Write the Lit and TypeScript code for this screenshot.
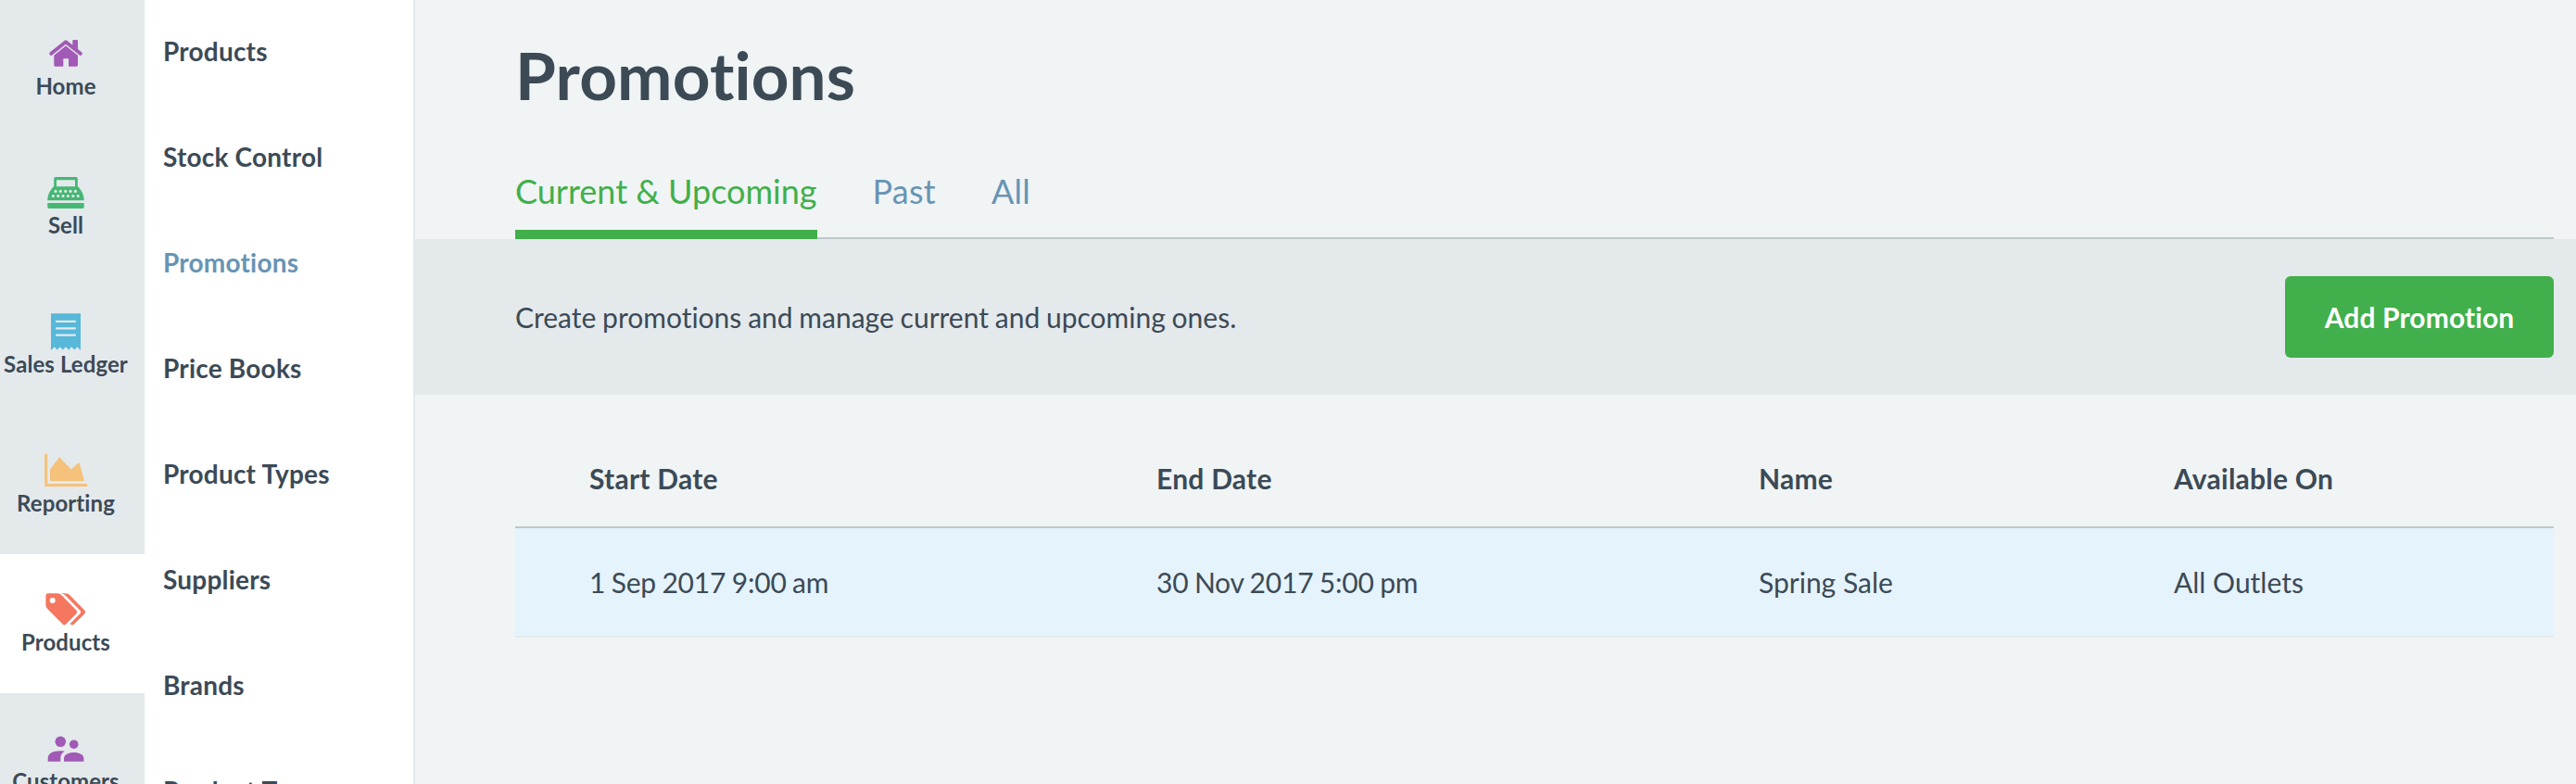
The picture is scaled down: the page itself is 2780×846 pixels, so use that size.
import { LitElement, html, css, svg } from "lit";
import { customElement } from "lit/decorators.js";
import { classMap } from "lit/directives/class-map.js";

const icons = {
  home: svg`
    <path d="M55.3 59.800 71 47.200 86.800 59.800" fill="none" stroke="currentColor" stroke-width="4" stroke-linecap="round" stroke-linejoin="round"/>
    <path d="M78.300 46q0-1 1-1h3.700q1 0 1 1v11.500l-5.700-4.600z"/>
    <path d="M71 51.400 84 61.800v10.400q0 1.600-1.600 1.600H74v-8.600h-5.700v8.600h-8.400q-1.600 0-1.600-1.600V61.800z"/>`,
  sell: svg`
    <path fill-rule="evenodd" d="M60 43h22q1.800 0 1.800 1.800v8.200c4 4 6.900 9.200 6.900 15.200H51.300c0-6 2.900-11.200 6.900-15.200v-8.200Q58.200 43 60 43zM61 46.300v6.900h20v-6.900z"/>
    <path d="M51.300 71h39.400v4.300q0 1.700-1.700 1.700H53q-1.700 0-1.700-1.700z"/>
    <g class="cut">
      ${[60, 65.3, 70.7, 76, 81.4].map((x) => svg`<circle cx=${x} cy="58.400" r="1.550"/>`)}
      ${[57.4, 62.7, 68, 73.4, 78.8, 84.2].map((x) => svg`<circle cx=${x} cy="63.500" r="1.550"/>`)}
    </g>`,
  ledger: svg`
    <path d="M55 40.200h32v39.200l-.6.100-3-3.300-3 3.300-3.200-3.300-3.100 3.300-3.100-3.300-3.100 3.300-3.200-3.300-3 3.300-3-3.300-3 3.300-.7-.1z"/>
    <path class="rule" d="M61 48.800h20M61 56.300h20M61 63.600h20"/>`,
  reporting: svg`
    <path d="M48.200 42h3v32H94v3H48.200z"/>
    <path d="M54 58.400 64.200 45.300 76.700 58.400 85.500 51 91 71H54z"/>`,
  products: svg`
    <path fill-rule="evenodd" d="M52 42.300h9.500c2 0 3.700.8 5.200 2.200L82.400 60.400q1.700 1.900 0 3.800L71.200 75.600q-1.800 1.800-3.600 0L51.400 59.300c-1.400-1.500-2-3-2-5V45q0-2.700 2.600-2.700zM56.700 46.900a3 3 0 1 0 0 6 3 3 0 0 0 0-6z"/>
    <path d="M65.600 42.300h4.700c2.200 0 3.800.8 5.300 2.200L91.300 60.400q1.700 1.900 0 3.800L80 75.600q-1.900 1.800-4 0L75.700 75 86.500 64q1.400-1.600 0-3.200L71.200 45.300c-1.700-1.700-3.200-2.600-5.600-3z"/>`,
  customers: svg`
    <circle cx="65.300" cy="52.300" r="5.800"/>
    <circle cx="79.700" cy="55.200" r="4.800"/>
    <path d="M51.700 73.800V70c0-5 5.600-7.700 13.400-7.700 1.700 0 3.200.1 4.600.4-3.200 2-4.400 4.300-4.400 7.200v3.900z"/>
    <path d="M69 73.800V70.600c0-4.300 4.600-6.500 10.700-6.500s10.700 2.200 10.700 6.500v3.200z"/>`,
};

type IconName = keyof typeof icons;

const sections: { label: string; icon: IconName; active?: boolean }[] = [
  { label: "Home", icon: "home" },
  { label: "Sell", icon: "sell" },
  { label: "Sales Ledger", icon: "ledger" },
  { label: "Reporting", icon: "reporting" },
  { label: "Products", icon: "products", active: true },
  { label: "Customers", icon: "customers" },
];

const pages = [
  "Products",
  "Stock Control",
  "Promotions",
  "Price Books",
  "Product Types",
  "Suppliers",
  "Brands",
  "Product Tags",
];

const tabs = ["Current & Upcoming", "Past", "All"];

const promotions = [
  {
    start: "1 Sep 2017 9:00 am",
    end: "30 Nov 2017 5:00 pm",
    name: "Spring Sale",
    outlets: "All Outlets",
  },
];

@customElement("app-sidebar")
class AppSidebar extends LitElement {
  static styles = css`
    :host {
      display: block;
      flex: none;
      width: 156px;
      overflow: hidden;
      background: #e4e9ec;
    }
    .list {
      display: flex;
      flex-direction: column;
      margin-top: -2px;
    }
    .item {
      box-sizing: border-box;
      flex: none;
      display: flex;
      flex-direction: column;
      align-items: center;
      height: 150px;
      padding: 36px 14px 0 0;
      font-size: 24px;
      font-weight: 700;
      letter-spacing: 0.08px;
      line-height: 28px;
      white-space: nowrap;
    }
    .item.active {
      background: #fff;
    }
    .icon {
      display: block;
      width: 52px;
      height: 48px;
      margin-bottom: -3px;
      fill: currentColor;
    }
    .home,
    .customers {
      color: #a15ab5;
    }
    .sell {
      color: #45b874;
    }
    .ledger {
      color: #57b8d9;
    }
    .reporting {
      color: #f4c27a;
    }
    .products {
      color: #f5775f;
    }
    .cut {
      fill: #e4e9ec;
    }
    .rule {
      fill: none;
      stroke: #e4e9ec;
      stroke-width: 2.2;
      stroke-linecap: round;
    }
  `;
  render() {
    return html`<nav class="list">
      ${sections.map(
        (s) => html`<div class=${classMap({ item: true, active: !!s.active })}>
          <svg class="icon ${s.icon}" viewBox="45 36 52 48">${icons[s.icon]}</svg>
          <span>${s.label}</span>
        </div>`
      )}
    </nav>`;
  }
}

@customElement("app-submenu")
class AppSubmenu extends LitElement {
  static styles = css`
    :host {
      display: block;
      flex: none;
      box-sizing: border-box;
      width: 292px;
      overflow: hidden;
      background: #fff;
      border-right: 2px solid #e4e9ec;
    }
    .list {
      display: flex;
      flex-direction: column;
      margin-top: -2px;
    }
    .item {
      flex: none;
      padding-left: 20px;
      font-size: 28px;
      font-weight: 700;
      letter-spacing: 0.2px;
      line-height: 114px;
      white-space: nowrap;
    }
    .item.active {
      color: #6894b4;
    }
  `;
  render() {
    return html`<nav class="list">
      ${pages.map(
        (p) => html`<div class=${classMap({ item: true, active: p === "Promotions" })}>${p}</div>`
      )}
    </nav>`;
  }
}

@customElement("app-root")
class AppRoot extends LitElement {
  static styles = css`
    :host {
      display: flex;
      height: 846px;
      overflow: hidden;
      background: #f0f4f5;
      color: #3c4a56;
      font-family: Lato, "Liberation Sans", sans-serif;
      font-size: 30px;
      font-variant-ligatures: none;
    }
    .main {
      flex: 1;
      min-width: 0;
    }
    .head {
      padding: 38px 24px 0 108px;
    }
    .title {
      margin: 0;
      font-size: 71px;
      font-weight: 700;
      letter-spacing: 0.15px;
      line-height: 86px;
    }
    .tabs {
      display: flex;
      gap: 60px;
      height: 90px;
      margin-top: 44px;
      box-shadow: inset 0 -2px #bdc8cd;
      font-size: 36px;
      color: #6894b4;
    }
    .tab {
      box-sizing: border-box;
      height: 90px;
      padding-top: 16px;
      letter-spacing: 0.25px;
      line-height: 44px;
    }
    .tab.active {
      color: #41af4b;
      letter-spacing: 0;
      border-bottom: 10px solid #41af4b;
    }
    .bar {
      box-sizing: border-box;
      display: flex;
      align-items: center;
      justify-content: space-between;
      height: 168px;
      padding: 0 24px 0 108px;
      background: #e4e9ec;
    }
    .note {
      word-spacing: -0.9px;
    }
    .button {
      width: 290px;
      height: 88px;
      padding: 0;
      border: 0;
      border-radius: 6px;
      background: #41af4b;
      color: #fff;
      font: inherit;
      font-weight: 700;
      letter-spacing: 0.12px;
    }
    .table {
      padding: 50px 24px 0 108px;
    }
    .row {
      box-sizing: border-box;
      display: grid;
      grid-template-columns: 612px 650px 448px 1fr;
      align-items: center;
      height: 118px;
      padding-left: 80px;
      background: #e5f3fc;
      border-bottom: 2px solid #e4ebee;
    }
    .date {
      letter-spacing: -0.2px;
      word-spacing: -1px;
    }
    .row.header {
      height: 94px;
      padding-bottom: 12px;
      background: none;
      border-bottom-color: #bdc8cd;
      font-weight: 700;
      letter-spacing: 0.25px;
    }
  `;
  render() {
    return html`
      <app-sidebar></app-sidebar>
      <app-submenu></app-submenu>
      <main class="main">
        <header class="head">
          <h1 class="title">Promotions</h1>
          <div class="tabs">
            ${tabs.map((t, i) => html`<div class=${classMap({ tab: true, active: i === 0 })}>${t}</div>`)}
          </div>
        </header>
        <section class="bar">
          <span class="note">Create promotions and manage current and upcoming ones.</span>
          <button class="button">Add Promotion</button>
        </section>
        <section class="table">
          <div class="row header">
            <span>Start Date</span><span>End Date</span><span>Name</span><span>Available On</span>
          </div>
          ${promotions.map(
            (p) => html`<div class="row">
              <span class="date">${p.start}</span><span class="date">${p.end}</span><span>${p.name}</span><span>${p.outlets}</span>
            </div>`
          )}
        </section>
      </main>
    `;
  }
}
